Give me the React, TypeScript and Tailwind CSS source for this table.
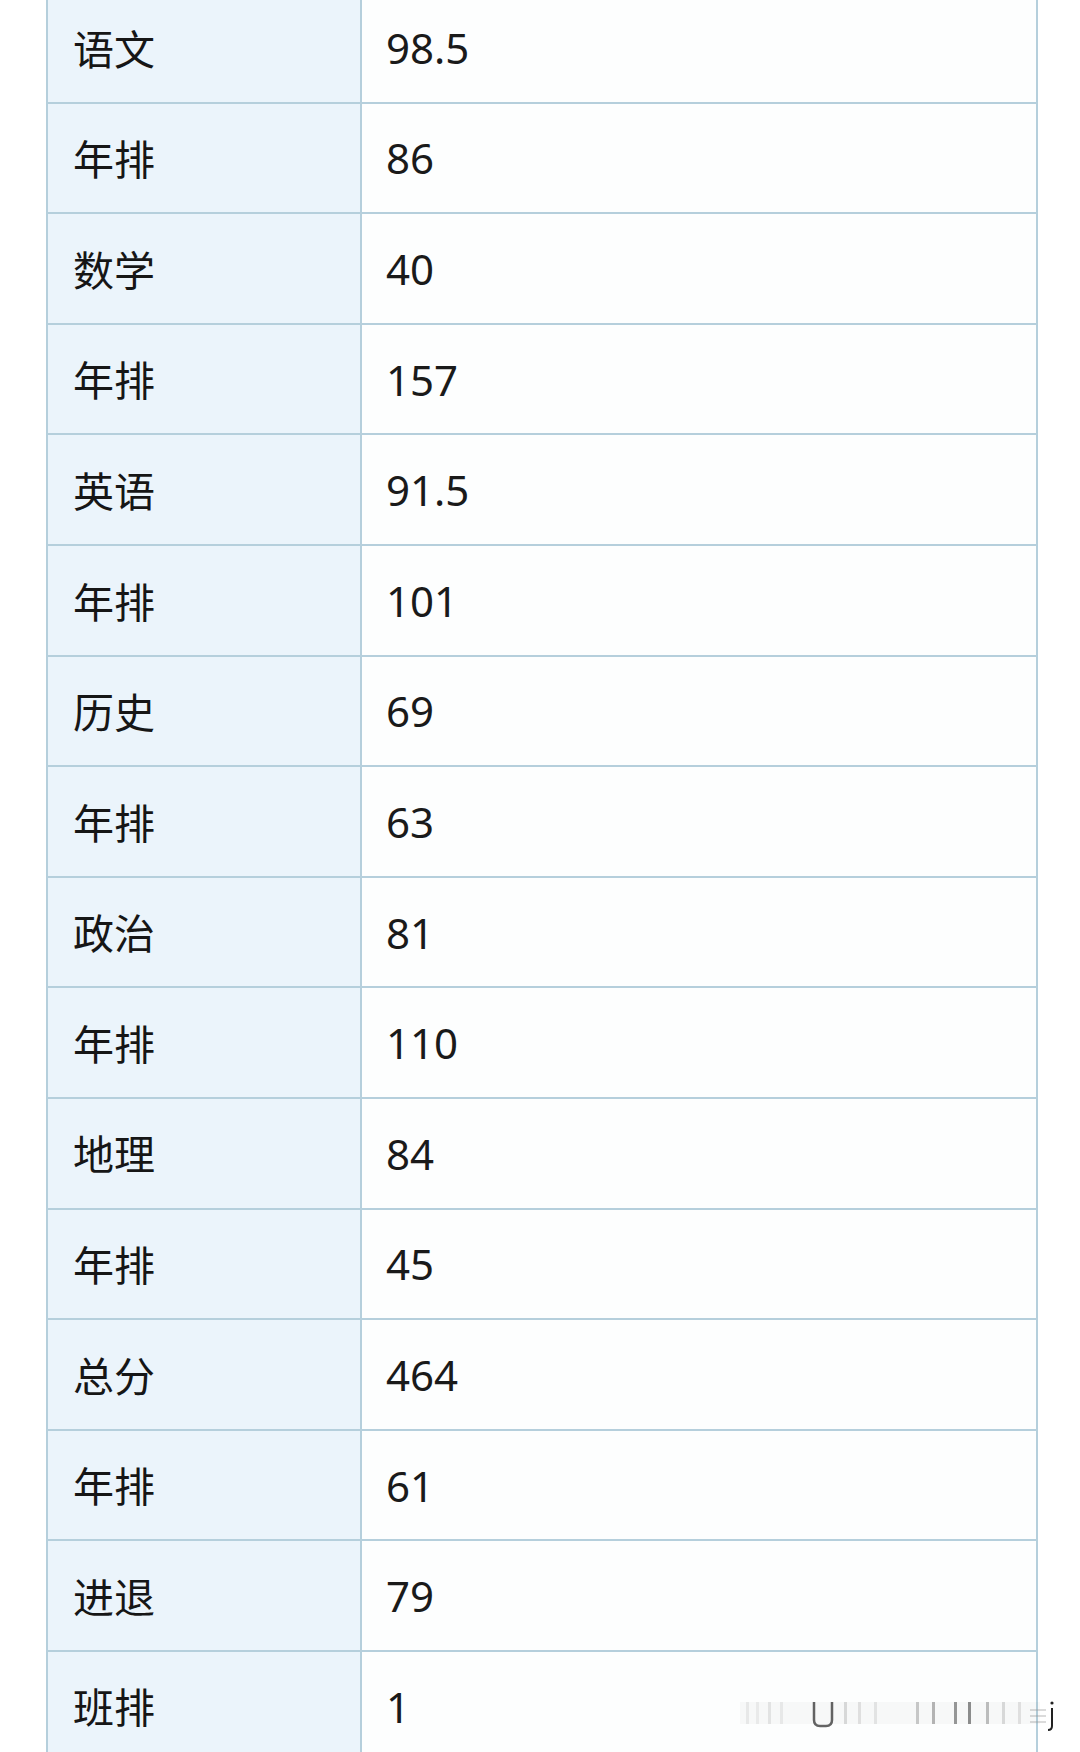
const rows = [
  ["语文", "98.5"],
  ["年排", "86"],
  ["数学", "40"],
  ["年排", "157"],
  ["英语", "91.5"],
  ["年排", "101"],
  ["历史", "69"],
  ["年排", "63"],
  ["政治", "81"],
  ["年排", "110"],
  ["地理", "84"],
  ["年排", "45"],
  ["总分", "464"],
  ["年排", "61"],
  ["进退", "79"],
  ["班排", "1"],
];

// smeared watermark at the bottom right, drawn as faint strokes
const Watermark = () => {
  const bars = [
    { x: 6, o: 0.08 }, { x: 16, o: 0.07 }, { x: 28, o: 0.1 }, { x: 40, o: 0.08 },
    { x: 104, o: 0.16 }, { x: 118, o: 0.12 }, { x: 134, o: 0.1 }, { x: 176, o: 0.25 },
    { x: 192, o: 0.35 }, { x: 214, o: 0.5 }, { x: 228, o: 0.55 }, { x: 246, o: 0.3 },
    { x: 262, o: 0.16 }, { x: 278, o: 0.12 },
  ];
  return (
    <svg
      className="absolute left-[740px] top-[1692px] pointer-events-none"
      width="320"
      height="44"
      viewBox="0 0 320 44"
    >
      <rect x="0" y="10" width="300" height="22" fill="#000" opacity="0.025" />
      {bars.map((b, i) => (
        <rect key={i} x={b.x} y="10" width="3" height="22" fill="#333" opacity={b.o} />
      ))}
      <path d="M74 10 V28 Q74 34 80 34 H86 Q92 34 92 28 V10" fill="none" stroke="#222" strokeWidth="2.5" opacity="0.7" />
      <path d="M290 18 H306 M290 24 H306 M290 30 H306" stroke="#999" strokeWidth="2" opacity="0.35" />
      <path d="M312 16 V34 Q312 38 308 38" fill="none" stroke="#222" strokeWidth="2" />
      <circle cx="312" cy="11" r="1.6" fill="#222" />
    </svg>
  );
};

export default function App() {
  return (
    <div className="relative w-[1080px] h-[1752px] overflow-hidden bg-white">
      <div className="ml-[46px] -mt-[7px] w-[992px] border-x-2 border-[#b5cfdc]">
        {rows.map(([label, value], i) => (
          <div
            key={i}
            className="grid grid-cols-[314px_1fr] h-[110.6px] border-b-2 border-[#b5cfdc]"
          >
            <div className="flex items-center pl-[25px] bg-[#ebf4fb] border-r-2 border-[#b5cfdc] text-[41px] text-[#161616] font-['Noto_Sans_CJK_SC',sans-serif]">
              {label}
            </div>
            <div className="flex items-center pl-[24px] bg-[#fdfefe] text-[42px] text-[#1a1a1a] font-['Noto_Sans','Noto_Sans_CJK_SC',sans-serif]">
              {value}
            </div>
          </div>
        ))}
      </div>
      <Watermark />
    </div>
  );
}
